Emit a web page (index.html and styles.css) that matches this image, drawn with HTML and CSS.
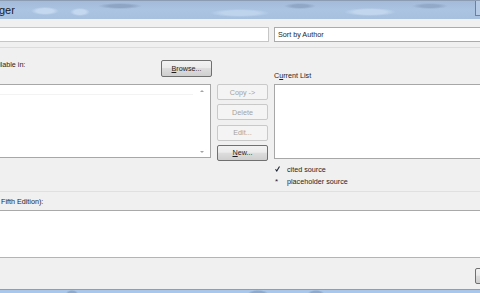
FILE: index.html
```html
<!DOCTYPE html>
<html lang="en">
<head>
  <meta charset="UTF-8">
  <meta name="viewport" content="width=device-width, initial-scale=1.0">
  <title>Source Manager</title>
  <link rel="stylesheet" href="styles.css">
</head>
<body>

  <!-- Title bar (window frame) -->
  <div class="titlebar">
    <span class="title">ger</span>
    <span class="frame-btn"></span>
  </div>

  <div class="dialog">

    <!-- Search / sort -->
    <div class="top">
      <div class="search"></div>
      <div class="sort">Sort by Author</div>
    </div>

    <!-- Source lists -->
    <div class="sources">
      <div class="col-left">
        <div class="left-head">
          <span class="label">ilable in:</span>
          <button class="btn"><u>B</u>rowse...</button>
        </div>
        <div class="listbox left-list">
          <div class="list-rows"><div class="row-line"></div></div>
          <div class="scrollbar">
            <span class="arrow up"></span>
            <span class="arrow down"></span>
          </div>
        </div>
      </div>

      <div class="col-mid">
        <button class="btn disabled">Copy -&gt;</button>
        <button class="btn disabled">Delete</button>
        <button class="btn disabled">Edit...</button>
        <button class="btn"><u>N</u>ew...</button>
      </div>

      <div class="col-right">
        <div class="label">C<u>u</u>rrent List</div>
        <div class="listbox right-list"></div>
        <ul class="legend">
          <li>
            <span class="mark">
              <svg width="5" height="6" viewBox="0 0 5 6"><path d="M0.5 3.2 L1.8 5 L4.5 0.5" fill="none" stroke="#1d2433" stroke-width="1.1"/></svg>
            </span>
            cited source
          </li>
          <li><span class="mark star">*</span>placeholder source</li>
        </ul>
      </div>
    </div>

    <!-- Preview -->
    <div class="preview-label">Fifth Edition):</div>
    <div class="preview"></div>

    <div class="footer">
      <button class="btn close-btn" aria-label="Close"></button>
    </div>
  </div>

  <div class="taskbar"></div>

</body>
</html>
```

FILE: styles.css
```css
html, body {
  margin: 0;
  padding: 0;
  overflow: hidden;
  height: 293px;
}

body {
  font-family: "Liberation Sans", Arial, sans-serif;
  font-size: 7.2px;
  color: #1e1e1e;
  background-color: #f0f0f0;
}

/* window frame */
.titlebar {
  height: 19px;
  display: flex;
  align-items: center;
  justify-content: space-between;
  border-top: 1px solid #8b9cb3;
  box-sizing: border-box;
  background:
    radial-gradient(ellipse 14px 4px at 45px 10px, #c4d8ef 60%, transparent 100%),
    radial-gradient(ellipse 10px 4px at 80px 11px, #c4d8ef 60%, transparent 100%),
    radial-gradient(ellipse 22px 3px at 120px 5px, #8ea6c4 50%, transparent 100%),
    radial-gradient(ellipse 30px 4px at 240px 12px, #bed4ed 60%, transparent 100%),
    radial-gradient(ellipse 16px 3px at 300px 5px, #90a8c6 50%, transparent 100%),
    radial-gradient(ellipse 26px 4px at 370px 11px, #c2d7ee 60%, transparent 100%),
    radial-gradient(ellipse 18px 3px at 430px 5px, #92aac8 50%, transparent 100%),
    linear-gradient(180deg, #a3bbd8 0, #abc4e2 50%, #a6c0de 100%);
}

.title {
  font-size: 11px;
  color: #1a1a1a;
  margin-left: -1px;
}

.frame-btn {
  width: 10px;
  height: 14px;
  margin-top: -4px;
  border-left: 1px solid #6d7f99;
  border-bottom: 1px solid #6d7f99;
  background: #b5cbe6;
  margin-right: -6px;
}

.dialog {
  margin: 0 -60px 0 -6px;
}

/* search row */
.top {
  display: flex;
  gap: 5px;
  padding: 8px 0 5px;
  border-bottom: 1px solid #dcdcdc;
}

.search {
  width: 275px;
  height: 15px;
  box-sizing: border-box;
  background: white;
  border: 1px solid #c6c6c6;
}

.sort {
  flex: 1;
  height: 15px;
  box-sizing: border-box;
  background: white;
  border: 1px solid #ababab;
  padding-left: 3px;
  line-height: 13px;
}

/* lists */
.sources {
  display: grid;
  grid-template-columns: 217px 51px 1fr;
  column-gap: 6px;
  padding-bottom: 4px;
  border-bottom: 1px solid #e0e0e0;
}

.col-left {
  padding-top: 12px;
}

.left-head {
  display: flex;
  justify-content: space-between;
  align-items: flex-start;
  height: 17px;
  padding-left: 5px;
}

.label {
  line-height: 10px;
}

.btn {
  font-family: "Liberation Sans", Arial, sans-serif;
  font-size: 7.2px;
  color: #1e1e1e;
  height: 16px;
  width: 51px;
  padding: 0;
  border: 1px solid #707070;
  border-radius: 2px;
  background: linear-gradient(180deg, #f2f2f2 0, #ebebeb 45%, #dddddd 50%, #cfcfcf 100%);
}

.left-head .btn {
  height: 17px;
  margin-right: -1px;
}

.btn.disabled {
  color: #a3a3a3;
  border-color: #c9c9c9;
  background: #f4f4f4;
}

.listbox {
  background: white;
  border: 1px solid #a7a7a7;
  box-sizing: border-box;
}

.left-list {
  margin-top: 7px;
  height: 74px;
  display: flex;
}

.list-rows {
  flex: 1;
  padding-top: 9px;
}

.row-line {
  border-bottom: 1px solid #f3f3f3;
}

.scrollbar {
  width: 17px;
  display: flex;
  flex-direction: column;
  justify-content: space-between;
  align-items: center;
  padding: 5px 0 4px;
}

.arrow {
  width: 0;
  height: 0;
  border-left: 2px solid transparent;
  border-right: 2px solid transparent;
}

.arrow.up {
  border-bottom: 2px solid #a4a4a4;
}

.arrow.down {
  border-top: 2px solid #a4a4a4;
}

.col-mid {
  padding-top: 36px;
  height: 77px;
  display: flex;
  flex-direction: column;
  justify-content: space-between;
}

.col-right {
  padding-top: 22px;
}

.col-right .label {
  height: 11px;
  line-height: 11px;
  margin-bottom: 3px;
}

.right-list {
  height: 75px;
}

.legend {
  list-style: none;
  margin: 4px 0 0;
  padding: 0;
}

.legend li {
  display: flex;
  align-items: center;
  height: 12px;
}

.mark {
  width: 12px;
  padding-left: 1px;
  display: flex;
  align-items: center;
}

.mark.star {
  color: #1d2433;
  font-size: 8px;
}

/* preview */
.preview-label {
  padding: 4px 0 0 7px;
  line-height: 11px;
  margin-bottom: 3px;
}

.preview {
  height: 48px;
  box-sizing: border-box;
  background: white;
  border-top: 1px solid #a9a9a9;
  border-bottom: 1px solid #b4b4b4;
}

.footer {
  height: 31px;
  box-sizing: border-box;
  padding-top: 10px;
  display: flex;
  justify-content: flex-end;
}

.close-btn {
  width: 55px;
  margin-right: 10px;
}

.taskbar {
  height: 6px;
  border-top: 1px solid #8d9db3;
  background:
    radial-gradient(ellipse 6px 3px at 72px 3px, #8ea9cb 60%, transparent 100%),
    radial-gradient(ellipse 10px 3px at 258px 3px, #8ea9cb 60%, transparent 100%),
    radial-gradient(ellipse 8px 3px at 316px 3px, #8ea9cb 60%, transparent 100%),
    #a9c7ea;
}
```
